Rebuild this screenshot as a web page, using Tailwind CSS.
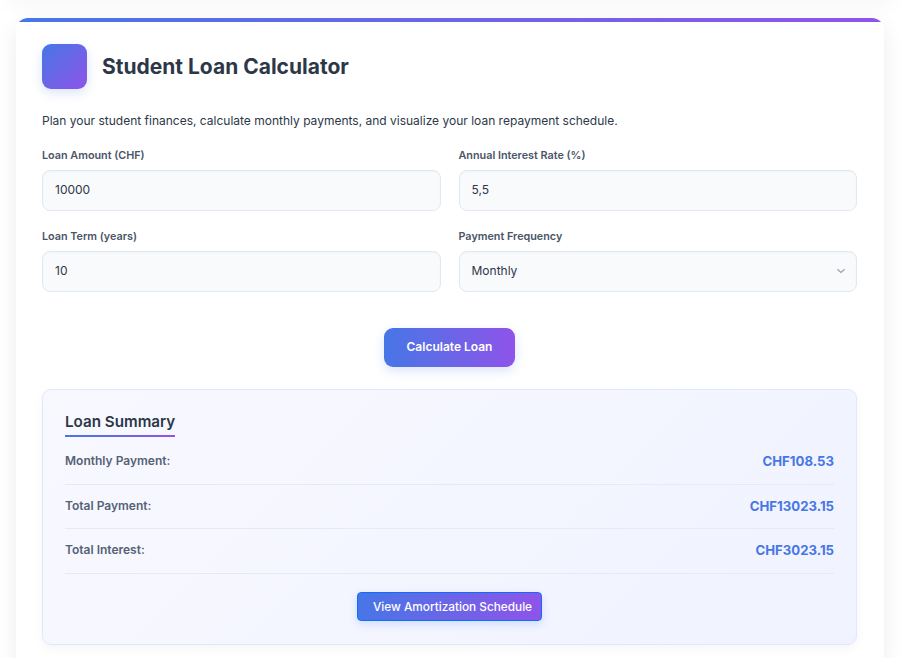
<!DOCTYPE html>
<html lang="en">
<head>
<meta charset="utf-8">
<title>Student Loan Calculator</title>
<script src="https://cdn.jsdelivr.net/npm/@tailwindcss/browser@4"></script>
</head>
<body class="h-[658px] overflow-hidden bg-white font-[Inter,sans-serif] text-[12px] text-[#2d3748]">
  <div class="mx-[16px] mb-[18px] h-0 w-[868px] shadow-[0_-6px_22px_8px_rgba(0,0,0,0.05)]"></div>
  <main class="relative h-[640px] w-[868px] ml-[16px] rounded-t-[12px] bg-white px-[26px] shadow-[0_8px_22px_rgba(0,0,0,0.08)]">
    <div class="absolute inset-0 overflow-hidden rounded-t-[12px]"><div class="h-[4px] bg-linear-to-r/srgb from-[#4776e6] to-[#8e54e9]"></div></div>
    <header class="relative flex items-center gap-[15px] pt-[26px]">
      <div class="size-[45px] rounded-[9px] bg-linear-135/srgb from-[#4776e6] to-[#8e54e9] shadow-[0_4px_11px_rgba(71,118,230,0.2)]"></div>
      <h1 class="text-[21px] leading-[26px] font-bold">Student Loan Calculator</h1>
    </header>
    <p class="relative mt-[22px] h-[20px] leading-[20px] text-[12px]">Plan your student finances, calculate monthly payments, and visualize your loan repayment schedule.</p>
    <form class="relative mt-[16px] grid w-[815px] grid-cols-2 gap-x-[18px] gap-y-[17px]">
      <label class="block h-[64px]"><span class="block h-[23px] pt-[1px] text-[10.8px] leading-[16px] font-semibold text-[#4a5568]">Loan Amount (CHF)</span>
        <input class="block h-[41px] w-full rounded-[8px] border border-[#e2e8f0] bg-[#f9fafc] px-[12px] pb-[2px] text-[12px] shadow-[inset_0_1px_2px_rgba(0,0,0,0.03)]" value="10000"></label>
      <label class="block h-[64px]"><span class="block h-[23px] pt-[1px] text-[10.8px] leading-[16px] font-semibold text-[#4a5568]">Annual Interest Rate (%)</span>
        <input class="block h-[41px] w-full rounded-[8px] border border-[#e2e8f0] bg-[#f9fafc] px-[12px] pb-[2px] text-[12px] shadow-[inset_0_1px_2px_rgba(0,0,0,0.03)]" value="5,5"></label>
      <label class="block h-[64px]"><span class="block h-[23px] pt-[1px] text-[10.8px] leading-[16px] font-semibold text-[#4a5568]">Loan Term (years)</span>
        <input class="block h-[41px] w-full rounded-[8px] border border-[#e2e8f0] bg-[#f9fafc] px-[12px] pb-[2px] text-[12px] shadow-[inset_0_1px_2px_rgba(0,0,0,0.03)]" value="10"></label>
      <div class="h-[64px]"><div class="h-[23px] pt-[1px] text-[10.8px] leading-[16px] font-semibold text-[#4a5568]">Payment Frequency</div>
        <div class="flex h-[41px] items-center justify-between rounded-[8px] border border-[#e2e8f0] bg-[#f9fafc] pr-[11px] pb-[1px] pl-[12px] text-[12px] leading-[18px] shadow-[inset_0_1px_2px_rgba(0,0,0,0.03)]"><span>Monthly</span>
          <svg class="size-[8px]" viewBox="0 0 8 8" fill="none" stroke="#9a9eae" stroke-width="1.2"><path d="M0.4 2.3 4 5.4 7.6 2.3"/></svg></div></div>
    </form>
    <button class="relative mt-[36px] ml-[342px] block h-[39px] w-[131px] rounded-[9px] bg-linear-to-r/srgb from-[#4776e6] to-[#8e54e9] pb-[1px] text-[12px] font-semibold text-white shadow-[0_4px_11px_rgba(71,118,230,0.2)]">Calculate Loan</button>
    <section class="relative mt-[22px] h-[256px] w-[815px] rounded-[9px] border border-[#e0e7ff] bg-linear-135/srgb from-[#f8f9ff] to-[#f0f2ff] px-[22px] pt-[21px] shadow-[0_4px_11px_rgba(0,0,0,0.04)]">
      <h2 class="flex h-[26px] w-[110px] flex-col justify-between text-[15.2px] leading-[22px] font-semibold whitespace-nowrap">Loan Summary<span class="block h-[2px] bg-linear-to-r/srgb from-[#4776e6] to-[#8e54e9]"></span></h2>
      <dl class="w-[769px]">
        <div class="flex h-[48px] justify-between border-b border-[#e6eaf5] pt-[14px] leading-[20px]"><dt class="text-[12px] font-semibold text-[#566176]">Monthly Payment:</dt><dd class="text-[13.2px] leading-[21px] font-bold text-[#4776e6]">CHF108.53</dd></div>
        <div class="flex h-[44px] justify-between border-b border-[#e6eaf5] pt-[11px] leading-[20px]"><dt class="text-[12px] font-semibold text-[#566176]">Total Payment:</dt><dd class="text-[13.2px] leading-[21px] font-bold text-[#4776e6]">CHF13023.15</dd></div>
        <div class="flex h-[45px] justify-between border-b border-[#e6eaf5] pt-[11px] leading-[20px]"><dt class="text-[12px] font-semibold text-[#566176]">Total Interest:</dt><dd class="text-[13.2px] leading-[21px] font-bold text-[#4776e6]">CHF3023.15</dd></div>
      </dl>
      <button class="mx-auto mt-[18px] block h-[29px] w-[185px] rounded-[4px] border border-[#0d6efd] bg-linear-to-r/srgb from-[#4776e6] to-[#8e54e9] pt-[2px] pr-[8px] pl-[14px] text-[11.8px] font-medium whitespace-nowrap text-white shadow-[0_3px_8px_rgba(71,118,230,0.2)]">View Amortization Schedule</button>
    </section>
  </main>
</body>
</html>
